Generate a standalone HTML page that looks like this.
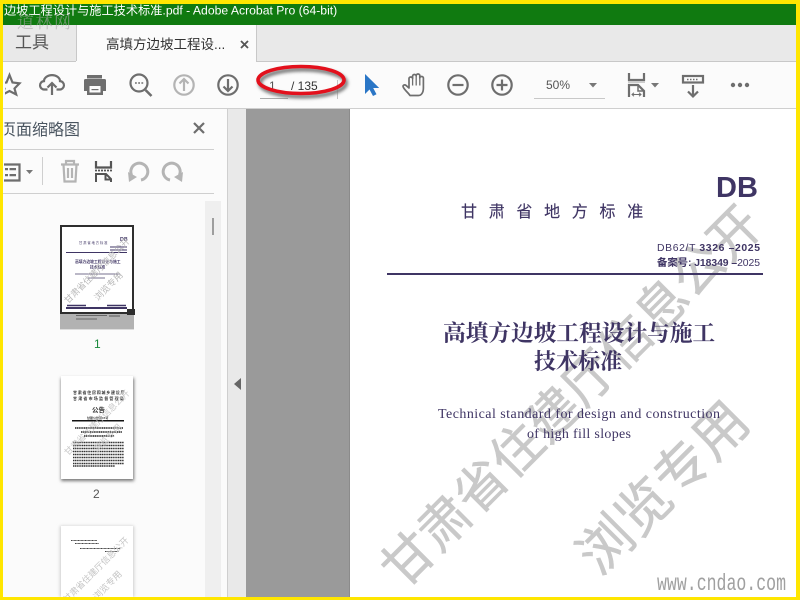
<!DOCTYPE html>
<html lang="zh"><head><meta charset="utf-8"><title>Acrobat</title>
<style>
html,body{margin:0;padding:0;width:800px;height:600px;overflow:hidden;background:#fff}
svg{position:absolute;left:0;top:0;display:block}
text{font-family:"Liberation Sans","Noto Sans CJK SC",sans-serif}
.serif{font-family:"Liberation Serif","Noto Serif CJK SC",serif}
.mono{font-family:"Liberation Mono",monospace}
.ic{fill:none;stroke:#6e6e6e;stroke-width:2.2}
.lt{fill:none;stroke:#b4b4b4;stroke-width:2.2}
</style></head><body>
<svg width="800" height="600" viewBox="0 0 800 600" xmlns="http://www.w3.org/2000/svg">
<defs>
<clipPath id="c"><rect x="3" y="4" width="793" height="593"/></clipPath>
<clipPath id="pg"><rect x="350" y="109" width="446" height="488"/></clipPath>
<clipPath id="t3"><rect x="61" y="526" width="72" height="71"/></clipPath>
<clipPath id="lft"><rect x="5" y="60" width="300" height="140"/></clipPath>
<filter id="sh" x="-20%" y="-40%" width="140%" height="200%"><feGaussianBlur stdDeviation="1.500"/></filter>
</defs>
<rect width="800" height="600" fill="#ffe600"/>
<g clip-path="url(#c)">
<!-- title bar -->
<rect x="3" y="4" width="793" height="21" fill="#107a10"/>
<text x="4" y="14.500" font-size="12.200" fill="#fff">边坡工程设计与施工技术标准.pdf - Adobe Acrobat Pro (64-bit)</text>
<!-- tabs -->
<rect x="3" y="25" width="793" height="36" fill="#e9e9e9"/>
<rect x="76" y="25" width="181" height="37" fill="#fbfbfb"/>
<path d="M76.500 25V61M256.500 25V62" stroke="#c8c8c8" fill="none"/>
<rect x="3" y="61" width="73" height="1" fill="#c8c8c8"/><rect x="257" y="61" width="539" height="1" fill="#c8c8c8"/>
<text x="15" y="48" font-size="17" fill="#555">工具</text>
<text x="17" y="28" font-size="17" fill="#aaa" opacity=".6" class="serif" letter-spacing="1.500">道林网</text>
<text x="106" y="49" font-size="13.500" fill="#333">高填方边坡工程设...</text>
<path d="M241 41l7 7m0-7l-7 7" stroke="#555" stroke-width="1.800"/>
<!-- toolbar -->
<rect x="3" y="62" width="793" height="46" fill="#fbfbfb"/>
<rect x="3" y="108" width="793" height="1" fill="#cfcfcf"/>
<g clip-path="url(#lft)"><path class="ic" d="M9.500 75l3 7.500 7 .8-5 5.200 1.700 6-6.700-3.500-6.700 3.500 1.700-6-5-5.200 7-.8z"/></g>
<path class="ic" d="M47.500 89.500h-3a4.200 4.200 0 0 1-.5-8.400a8 6 0 0 1 16 0a4.200 4.200 0 0 1-.5 8.400h-3"/>
<path class="ic" d="M52 95V83m-4.500 4.500l4.500-4.500 4.500 4.500"/>
<path d="M87 75h15v3.500H87zM85.500 79h19a1.500 1.500 0 0 1 1.500 1.500V91h-3v4H87v-4h-3V80.500a1.500 1.500 0 0 1 1.500-1.500z" fill="#6e6e6e"/>
<rect x="89.500" y="86" width="11" height="6.500" fill="#fbfbfb"/><rect x="91.500" y="89" width="7" height="1.200" fill="#6e6e6e"/>
<circle cx="139" cy="83" r="8.500" class="ic"/><path d="M145.500 90l6 6" stroke="#6e6e6e" stroke-width="2.600"/>
<path d="M135 83h1.800M138.200 83h1.800M141.400 83h1.800" stroke="#6e6e6e" stroke-width="1.600"/>
<circle cx="184" cy="85" r="9.700" class="lt"/><path class="lt" d="M184 91V79m-4.500 4.500l4.500-4.500 4.500 4.500"/>
<circle cx="228" cy="85" r="9.700" class="ic"/><path class="ic" d="M228 79v12m-4.500-4.500l4.500 4.500 4.500-4.500"/>
<!-- page box -->
<rect x="260" y="98" width="28" height="1" fill="#aaa"/>
<rect x="337" y="80" width="1" height="19" fill="#c4c4c4"/>
<text x="269" y="90" font-size="12" fill="#555">1</text>
<text x="291" y="90" font-size="12" fill="#333">/ 135</text>
<ellipse cx="303" cy="83" rx="43" ry="13.500" fill="none" stroke="#777" stroke-width="4" filter="url(#sh)"/>
<ellipse cx="301" cy="80" rx="43" ry="13.500" fill="none" stroke="#e3101c" stroke-width="3.600"/>
<!-- cursor -->
<path d="M365 74v20l4.500-4.500 3.500 6.500 3.500-1.800-3.300-6.200h6z" fill="#2a76c6"/>
<!-- hand -->
<path fill="none" stroke="#6e6e6e" stroke-width="1.700" stroke-linejoin="round" d="M410 95.500c-2-3-5.500-5.500-6.800-8.500-.7-1.700 1.300-2.800 2.700-1.700l3.100 2.700V78.500c0-2 3.600-2 3.600 0V76c0-2 3.600-2 3.600 0v-.5c0-2 3.600-2 3.600 0v2.500c0-2 3.600-2 3.600 0v10c0 4.500-2 7.500-5 7.500z"/>
<path fill="none" stroke="#6e6e6e" stroke-width="1.300" d="M412.600 78.500v7M416.200 76v9.500M419.800 76v9.500"/>
<circle cx="458" cy="85" r="9.700" class="ic"/><path class="ic" d="M452.500 85h11"/>
<circle cx="502" cy="85" r="9.700" class="ic"/><path class="ic" d="M496.500 85h11M502 79.500v11"/>
<text x="546" y="89" font-size="12" fill="#555">50%</text>
<path d="M589 83h8l-4 4.500z" fill="#777"/>
<rect x="534" y="98" width="71" height="1" fill="#c8c8c8"/>
<!-- fit width -->
<path class="ic" d="M629 73v7h15v-7"/><rect x="628" y="81" width="17" height="2" fill="#ccc"/>
<path class="ic" d="M629 97V85h9l6 6v6"/><path d="M638 85v6h6" fill="none" stroke="#6e6e6e" stroke-width="1.500"/>
<path d="M632 94.500h9m-7-1.800l-2 1.800 2 1.800m5-3.600l2 1.800-2 1.800" stroke="#6e6e6e" stroke-width="1" fill="none"/>
<path d="M651 83h8l-4 4.500z" fill="#777"/>
<!-- read mode -->
<rect x="683" y="76" width="20" height="6.500" fill="#fbfbfb" stroke="#6e6e6e" stroke-width="2.200"/>
<path d="M687 79.500h1.500M690 79.500h1.500M693 79.500h1.500M696 79.500h1.500" stroke="#6e6e6e" stroke-width="1.500"/>
<path class="ic" d="M693 85v11m-5-4.500l5 5 5-5"/>
<circle cx="733" cy="85" r="2.200" fill="#6e6e6e"/><circle cx="740" cy="85" r="2.200" fill="#6e6e6e"/><circle cx="747" cy="85" r="2.200" fill="#6e6e6e"/>
<!-- sidebar -->
<rect x="3" y="109" width="224" height="488" fill="#fbfbfb"/>
<rect x="227" y="109" width="1" height="488" fill="#cfcfcf"/>
<rect x="228" y="109" width="18" height="488" fill="#e9e9e9"/>
<path d="M241 378v12l-7-6z" fill="#666"/>
<text x="0" y="135" font-size="16" fill="#4a5560">页面缩略图</text>
<rect x="3" y="115" width="1.500" height="30" fill="#fbfbfb"/>
<path d="M194 123l10 10m0-10l-10 10" stroke="#6e6e6e" stroke-width="2.200"/>
<rect x="3" y="149" width="211" height="1" fill="#cfcfcf"/>
<rect x="3" y="193" width="211" height="1" fill="#cfcfcf"/>
<rect x="42" y="157" width="1" height="28" fill="#cfcfcf"/>
<path class="ic" d="M4 164.500h15.500v16H4"/>
<path d="M5 168h3v2.200H5zM5 174h3v2.200H5zM9.500 168h6.500v2.200H9.500zM9.500 174h6.500v2.200H9.500z" fill="#6e6e6e"/>
<path d="M26 170h7l-3.500 4z" fill="#777"/>
<path class="lt" d="M61 164.500h18M66 164.500V161h8v3.500M63.500 164.500l1 17h11l1-17M68 168v10M72 168v10"/>
<path d="M96 161v6.500h15V161" fill="none" stroke="#555" stroke-width="2.200"/>
<path d="M95 170.500h17" stroke="#555" stroke-width="1.800" stroke-dasharray="2 1" fill="none"/>
<path d="M96 182v-8h10l5 5v3M105.500 174v5.500h5.500" fill="none" stroke="#555" stroke-width="2"/>
<path fill="none" stroke="#b4b4b4" stroke-width="3" d="M131.500 175A8.500 8.500 0 1 1 141 180"/><path d="M128 172l9 5-8 5z" fill="#b4b4b4"/>
<path fill="none" stroke="#b4b4b4" stroke-width="3" d="M179.500 175A8.500 8.500 0 1 0 170 180"/><path d="M183 172l-9 5 8 5z" fill="#b4b4b4"/>
<!-- scroll -->
<rect x="205" y="201" width="16" height="396" fill="#efefef"/>
<rect x="212" y="218" width="2" height="17" fill="#9e9e9e"/>
<!-- thumb 1 -->
<rect x="60" y="225" width="74" height="104" fill="#b2b2b2"/>
<rect x="60" y="329" width="74" height="1" fill="#ddd"/>
<rect x="60" y="225" width="74" height="89" fill="#2e2e2e"/>
<rect x="62" y="227" width="70" height="85" fill="#fff"/>
<rect x="127" y="309" width="8" height="6" fill="#2e2e2e"/>
<text x="79" y="244" font-size="3.300" fill="#3f3564" letter-spacing=".9">甘肃省地方标准</text>
<text x="120" y="241" font-size="5.300" font-weight="bold" fill="#3f3564">DB</text>
<path d="M110 247h17M110 250h17" stroke="#3f3564" stroke-width="1"/>
<rect x="66" y="252" width="61" height="1" fill="#3f3564"/>
<text x="75" y="263" font-size="3.800" font-weight="bold" fill="#3f3564">高填方边坡工程设计与施工</text>
<text x="90" y="268.500" font-size="3.800" font-weight="bold" fill="#3f3564">技术标准</text>
<path d="M75 274h45M88 278h17" stroke="#77708f" stroke-width="1"/>
<path d="M67 305.500h19M107 305.500h19" stroke="#3f3564" stroke-width="1.500"/>
<rect x="66" y="307" width="61" height="2" fill="#3f3564"/>
<g fill="#b8b8b8"><text transform="translate(68,304) rotate(-45)" font-size="8.800">甘肃省住建厅信息公开</text><text transform="translate(98,301) rotate(-45)" font-size="9">浏览专用</text></g>
<path d="M76 315.500h31M76 319h21" stroke="#666" stroke-width="1"/><path d="M109 316h11" stroke="#555"/>
<text x="94" y="348" font-size="12" fill="#1a8a3c">1</text>
<!-- thumb 2 -->
<rect x="61" y="378" width="73" height="103" fill="#777" filter="url(#sh)"/>
<rect x="61" y="376" width="72" height="103" fill="#fff"/>
<g fill="#333"><text x="73" y="394" font-size="4" font-weight="bold" letter-spacing=".75">甘肃省住房和城乡建设厅</text>
<text x="73" y="400" font-size="4" font-weight="bold" letter-spacing="1.200">甘肃省市场监督管理局</text>
<text x="92" y="412" font-size="6.500" font-weight="bold">公告</text>
<text x="87" y="419" font-size="3" font-weight="bold">甘建公告第15号</text></g>
<rect x="72" y="420" width="52" height="1.500" fill="#111"/>
<g stroke="#333" stroke-width="1.600" stroke-dasharray="1.300 .5" fill="none">
<path d="M75 428h48M81 432h41M84 436h30" stroke="#222"/>
<path d="M73 442.500h51M73 445.500h51M73 448.500h51M73 451.500h51M73 454.500h51M73 457.500h51M73 460.500h51M73 463.500h51M73 466h42"/></g>
<g fill="#c0c0c0" opacity=".85"><text transform="translate(68,456) rotate(-45)" font-size="8.800">甘肃省住建厅信息公开</text><text transform="translate(97,453) rotate(-45)" font-size="9">浏览专用</text></g>
<text x="93" y="498" font-size="12" fill="#555">2</text>
<!-- thumb 3 -->
<rect x="60" y="526" width="74" height="71" fill="#ccc" filter="url(#sh)"/>
<rect x="61" y="526" width="72" height="71" fill="#fff"/>
<g stroke="#444" stroke-width="1" stroke-dasharray="1 .4" fill="none"><path d="M71 540.500h26M75 543.500h24M80 548.500h40M105 551.500h14"/></g>
<g clip-path="url(#t3)" fill="#c4c4c4"><text transform="translate(67,603) rotate(-45)" font-size="8.800">甘肃省住建厅信息公开</text><text transform="translate(97,600) rotate(-45)" font-size="9">浏览专用</text></g>
<!-- document -->
<rect x="246" y="109" width="104" height="488" fill="#9a9a9a"/>
<rect x="349" y="109" width="1" height="488" fill="#8b8b8b"/>
<rect x="350" y="109" width="446" height="488" fill="#fff"/>
<g clip-path="url(#pg)">
<g fill="#c9c9c9" stroke="#c9c9c9" stroke-width=".6">
<text transform="translate(408,558) rotate(-45)" x="-26" y="19" font-size="51.200">甘肃省住建厅信息公开</text>
<text transform="translate(605,544) rotate(-45)" x="-27" y="20" font-size="54">浏览专用</text>
</g>
<g fill="#3f3564">
<text x="461" y="217" font-size="16" letter-spacing="11.700" stroke="#3f3564" stroke-width=".15">甘肃省地方标准</text>
<text x="716" y="197" font-size="29" font-weight="bold">DB</text>
<text x="657" y="251" font-size="10.400" textLength="103">DB62/T <tspan font-weight="bold">3326 –2025</tspan></text>
<text x="657" y="266" font-size="10.400" textLength="103"><tspan font-weight="bold">备案号: J18349 –</tspan>2025</text>
<rect x="387" y="273" width="376" height="2"/>
<text x="443" y="341" font-size="22.700" font-weight="bold" class="serif">高填方边坡工程设计与施工</text>
<text x="534" y="369" font-size="22" font-weight="bold" class="serif">技术标准</text>
<text x="438" y="418" font-size="14" class="serif" textLength="282">Technical standard for design and construction</text>
<text x="527" y="438" font-size="14" class="serif" textLength="104">of high fill slopes</text>
</g>
<text x="657" y="590" font-size="23" fill="#a0a0a0" class="mono" textLength="129" lengthAdjust="spacingAndGlyphs">www.cndao.com</text>
</g>
</g>
</svg>
</body></html>
